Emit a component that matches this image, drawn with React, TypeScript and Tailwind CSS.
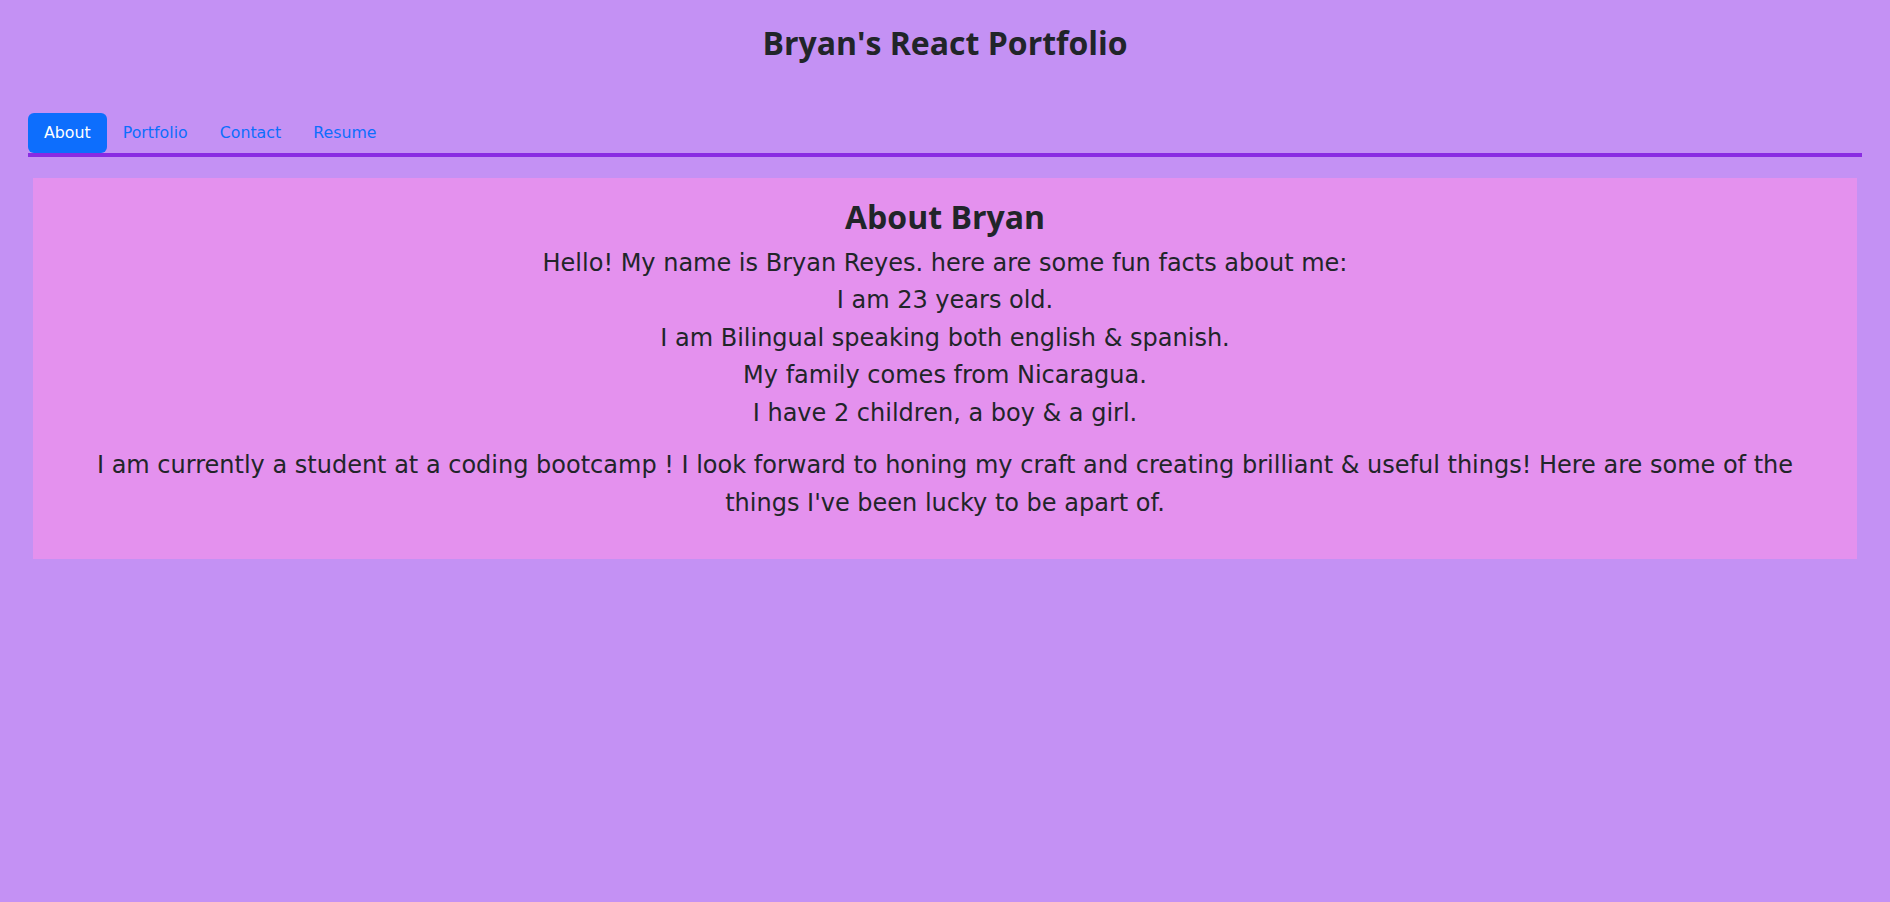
import React, { useState } from 'react';

const tabs = ['About', 'Portfolio', 'Contact', 'Resume'];

const facts = [
  'Hello! My name is Bryan Reyes. here are some fun facts about me:',
  'I am 23 years old.',
  'I am Bilingual speaking both english & spanish.',
  'My family comes from Nicaragua.',
  'I have 2 children, a boy & a girl.',
];

const App: React.FC = () => {
  const [active, setActive] = useState('About');

  return (
    <div className="min-h-screen bg-[#c491f4] font-['DejaVu_Sans',sans-serif] text-[#212529]">
      <header className="pt-[24px] text-center">
        <h1 className="font-['Open_Sans',sans-serif] text-[32px] font-bold leading-[1.2]">Bryan's React Portfolio</h1>
      </header>

      <div className="mx-[28px] mt-[51px]">
        {/* Nav tabs */}
        <nav className="flex border-b-4 border-[#8a2be2]">
          {tabs.map((tab) => (
            <button
              key={tab}
              onClick={() => setActive(tab)}
              className={`rounded-md px-4 py-2 text-[15.8px] leading-6 ${
                active === tab ? 'bg-[#0d6efd] text-white' : 'text-[#0d6efd]'
              }`}
            >
              {tab}
            </button>
          ))}
        </nav>

        {/* About card */}
        <section className="mx-[5px] mt-[21px] bg-[#e491ee] px-[30px] pt-[20px] pb-[37px] text-center">
          <h2 className="font-['Open_Sans',sans-serif] text-[32px] font-bold leading-[1.2]">About Bryan</h2>
          <div className="mt-[8px] text-[24px] leading-[37.5px]">
            {facts.map((line, index) => (
              <p key={index}>{line}</p>
            ))}
          </div>
          <p className="mt-[15px] text-[24px] leading-[37.5px]">
            I am currently a student at a coding bootcamp ! I look forward to honing my craft and creating brilliant &amp; useful things! Here are some of the things I've been lucky to be apart of.
          </p>
        </section>
      </div>
    </div>
  );
};

export default App;
